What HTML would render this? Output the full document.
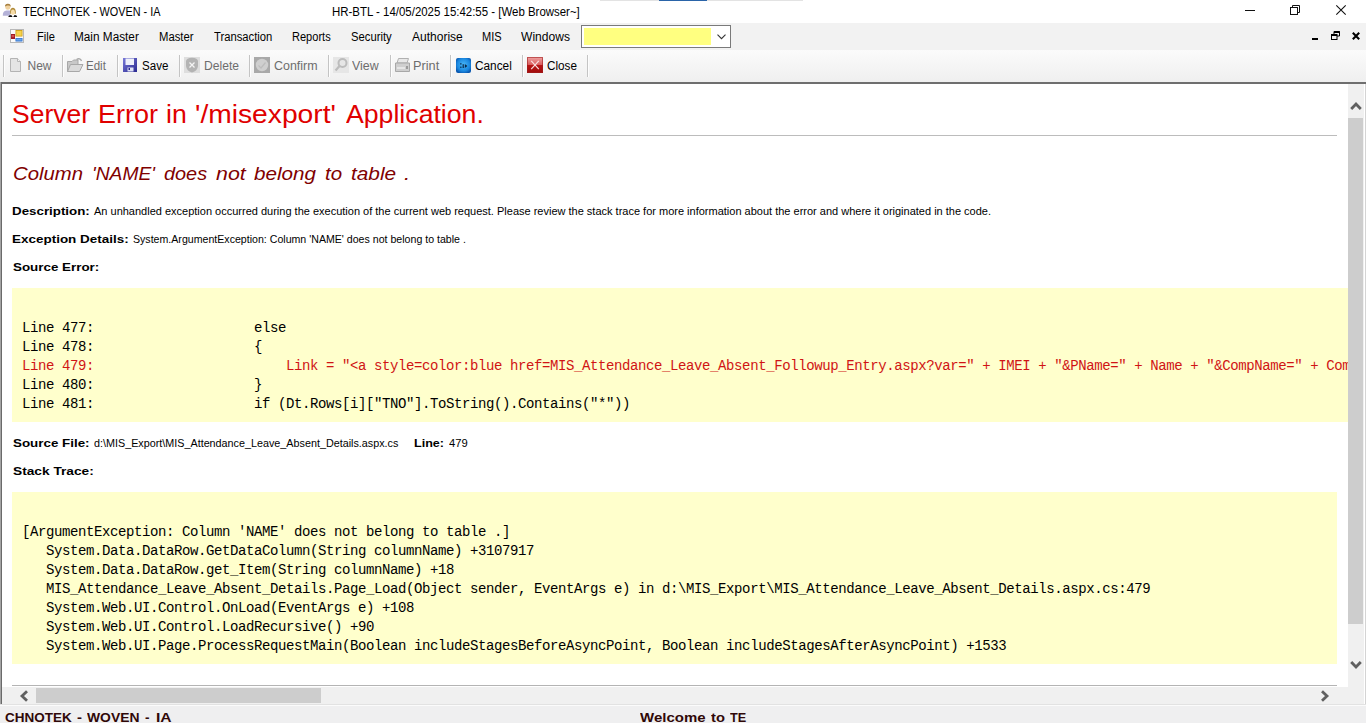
<!DOCTYPE html>
<html><head><meta charset="utf-8">
<style>
*{margin:0;padding:0;box-sizing:border-box}
html,body{width:1366px;height:723px;overflow:hidden;background:#fff;font-family:"Liberation Sans",sans-serif;position:relative}
.a{position:absolute}
.tx{position:absolute;white-space:nowrap;line-height:1;transform-origin:0 0;font-family:"Liberation Sans",sans-serif}
.code{position:absolute;white-space:pre;overflow:hidden;font-family:"Liberation Mono",monospace;color:#000}
.sep{position:absolute;top:55px;width:1px;height:22px;background:#c4c4c4;box-shadow:1px 0 0 #fdfdfd}
svg{position:absolute;overflow:visible}
</style></head><body>
<!-- title bar -->
<div class="a" style="left:600px;top:0;width:203px;height:1px;background:#e3e3e3"></div>
<div class="a" style="left:659px;top:0;width:48px;height:1px;background:#2a64a8"></div>
<svg style="left:0px;top:0px" width="20" height="20" viewBox="0 0 20 20">
 <path d="M2.8 15.8 Q2.6 10.8 6.5 10.6 L9.8 10.6 Q10.6 12 10.4 15.8 Z" fill="#b4b2d8"/>
 <ellipse cx="7.8" cy="6.8" rx="2.6" ry="2.9" fill="#f0d2a0"/>
 <path d="M5 6.5 Q5 3.6 8 3.8 Q10.8 4 10.8 6.8 Q9.5 5 7.2 5.6 Z" fill="#a88040"/>
 <ellipse cx="12.9" cy="11.6" rx="2.5" ry="3.2" fill="#f6dca8"/>
 <path d="M10 13.8 Q9.8 7.6 12.9 7.8 Q16 7.6 15.8 13.8 L15 13.8 Q15.2 9.4 12.9 9.4 Q10.6 9.4 10.8 13.8 Z" fill="#b08a38"/>
 <path d="M8.2 17 Q8.4 15 11.2 14.9 L12.6 17 Z M13.2 17 L14.6 14.9 Q17.2 15 17.2 17 Z" fill="#0e0e0e"/>
</svg>
<!-- window controls -->
<div class="a" style="left:1245px;top:10px;width:10px;height:1px;background:#111"></div>
<svg style="left:1290px;top:5px" width="10" height="10" viewBox="0 0 10 10">
 <rect x="0.5" y="2.5" width="7" height="7" fill="none" stroke="#111" stroke-width="1"/>
 <path d="M2.5 2.5 V0.5 H9.5 V7.5 H7.5" fill="none" stroke="#111" stroke-width="1"/>
</svg>
<svg style="left:1336px;top:5px" width="10" height="10" viewBox="0 0 10 10">
 <path d="M0.3 0.3 L9.7 9.7 M9.7 0.3 L0.3 9.7" stroke="#111" stroke-width="1.1"/>
</svg>

<!-- menu bar -->
<div class="a" style="left:0;top:23px;width:1366px;height:27px;background:#f2f2f2"></div>
<svg style="left:10px;top:29px" width="14" height="14" viewBox="0 0 14 14">
 <rect x="0.5" y="0.5" width="13" height="13" fill="#fbfbfb" stroke="#b8b8b8"/>
 <rect x="1" y="5" width="4" height="5" fill="#a01c24"/>
 <rect x="1.6" y="6" width="2.6" height="2.2" fill="#d04a4a"/>
 <rect x="5.5" y="1" width="7" height="6.5" fill="#c89a10"/>
 <rect x="6.3" y="1.8" width="5.4" height="5" fill="#f6d24a"/>
 <rect x="5.5" y="9" width="7" height="3.5" fill="#2f6fc8"/>
 <rect x="6.2" y="9.6" width="5.6" height="2" fill="#6aa6ee"/>
</svg>
<div class="a" style="left:581px;top:25px;width:150px;height:23px;border:1px solid #7a7a7a;background:#fff"></div>
<div class="a" style="left:584px;top:28px;width:127px;height:17px;background:#ffff80"></div>
<svg style="left:717px;top:34px" width="9" height="6" viewBox="0 0 9 6">
 <path d="M0.5 0.6 L4.5 4.6 L8.5 0.6" fill="none" stroke="#333" stroke-width="1.1"/>
</svg>
<!-- mdi controls -->
<div class="a" style="left:1312px;top:38px;width:6px;height:2px;background:#000"></div>
<svg style="left:1331px;top:31px" width="9" height="9" viewBox="0 0 9 9">
 <path d="M3 3 V0.5 H8.5 V5 H6" fill="none" stroke="#000" stroke-width="1"/>
 <path d="M3 1 H8.5" stroke="#000" stroke-width="2"/>
 <rect x="0.5" y="3.5" width="5.5" height="5" fill="none" stroke="#000" stroke-width="1"/>
 <path d="M0.5 4 H6" stroke="#000" stroke-width="2"/>
</svg>
<svg style="left:1352px;top:32px" width="8" height="8" viewBox="0 0 8 8">
 <path d="M0.8 0.8 L7.2 7.2 M7.2 0.8 L0.8 7.2" stroke="#000" stroke-width="2.1"/>
</svg>

<!-- toolbar -->
<div class="a" style="left:0;top:50px;width:1366px;height:32px;background:linear-gradient(#fbfbfb,#f4f4f4 60%,#efefef)"></div>
<div class="a" style="left:0;top:82px;width:1366px;height:2px;background:#6e6e6e"></div>
<div class="sep" style="left:3px"></div>
<div class="sep" style="left:62px"></div>
<div class="sep" style="left:117px"></div>
<div class="sep" style="left:179px"></div>
<div class="sep" style="left:249px"></div>
<div class="sep" style="left:328px"></div>
<div class="sep" style="left:390px"></div>
<div class="sep" style="left:450px"></div>
<div class="sep" style="left:522px"></div>
<div class="sep" style="left:587px"></div>
<!-- New icon -->
<svg style="left:10px;top:58px" width="12" height="14" viewBox="0 0 12 14">
 <path d="M0.5 0.5 H7.5 L10.5 3.5 V13.5 H0.5 Z" fill="#e4e4e4" stroke="#b4b4b4"/>
 <path d="M7.5 0.5 V3.5 H10.5" fill="#f4f4f4" stroke="#b4b4b4"/>
</svg>
<!-- Edit icon (open folder) -->
<svg style="left:67px;top:58px" width="17" height="14" viewBox="0 0 17 14">
 <path d="M0.5 3.5 H5 L6.5 2 H11 V13.5 H0.5 Z" fill="#c8c8c8" stroke="#a8a8a8"/>
 <path d="M0.5 13.5 L3.5 6.5 H16 L12.5 13.5 Z" fill="#dadada" stroke="#a8a8a8"/>
 <path d="M9.5 1.5 Q13 -0.5 14.5 3" fill="none" stroke="#a8a8a8" stroke-width="1.4"/>
</svg>
<!-- Save icon -->
<svg style="left:123px;top:58px" width="14" height="14" viewBox="0 0 14 14">
 <defs><linearGradient id="gs" x1="0" y1="0" x2="1" y2="1"><stop offset="0" stop-color="#7a7ad8"/><stop offset="1" stop-color="#2a2a90"/></linearGradient></defs>
 <rect x="0" y="0" width="14" height="14" fill="url(#gs)"/>
 <rect x="2.5" y="0.5" width="8.5" height="6.5" fill="#eef0fa"/>
 <rect x="4.5" y="9.5" width="6" height="4" fill="#dfe2f4"/>
 <rect x="5.5" y="10" width="1.5" height="2" fill="#2a2a90"/>
</svg>
<!-- Delete icon -->
<div class="a" style="left:184px;top:57px;width:16px;height:16px;background:#dedede"></div>
<svg style="left:185px;top:57px" width="14" height="16" viewBox="0 0 14 16">
 <path d="M7 0.8 Q12.5 1 13 4 V9 Q12.5 14 7 15.5 Q1.5 14 1 9 V4 Q1.5 1 7 0.8 Z" fill="#b3b3b3"/>
 <path d="M4.5 5.5 L9.5 10.5 M9.5 5.5 L4.5 10.5" stroke="#f4f4f4" stroke-width="1.3"/>
</svg>
<!-- Confirm icon -->
<div class="a" style="left:254px;top:57px;width:16px;height:16px;background:#a9a9a9"></div>
<svg style="left:254px;top:57px" width="16" height="16" viewBox="0 0 16 16">
 <circle cx="8" cy="8" r="6.2" fill="#cfcfcf"/>
 <path d="M4.5 8.5 L7 11 L11.5 5.5" fill="none" stroke="#bdbdbd" stroke-width="1.2"/>
</svg>
<!-- View icon -->
<div class="a" style="left:333px;top:57px;width:16px;height:16px;background:#e6e6e6"></div>
<svg style="left:333px;top:57px" width="16" height="16" viewBox="0 0 16 16">
 <circle cx="9.5" cy="6" r="4" fill="none" stroke="#bcbcbc" stroke-width="2"/>
 <path d="M7 8.5 L2.5 13.5" stroke="#bcbcbc" stroke-width="2.2"/>
</svg>
<!-- Print icon -->
<svg style="left:395px;top:58px" width="15" height="14" viewBox="0 0 15 14">
 <path d="M3.5 0.5 H13.5 L12 5 H2 Z" fill="#e8e8e8" stroke="#b0b0b0"/>
 <path d="M0.5 5 H14.5 V13.5 H0.5 Z" fill="#cfcfcf" stroke="#a8a8a8"/>
 <rect x="2" y="9" width="8" height="2" fill="#e6e6e6"/>
 <rect x="11" y="8" width="2" height="3" fill="#9a9a9a"/>
</svg>
<!-- Cancel icon -->
<svg style="left:456px;top:58px" width="15" height="15" viewBox="0 0 15 15">
 <defs><radialGradient id="gc" cx="0.5" cy="0.45" r="0.6"><stop offset="0" stop-color="#4ab8f8"/><stop offset="0.7" stop-color="#1a88e0"/><stop offset="1" stop-color="#0a58b0"/></radialGradient></defs>
 <rect x="0" y="0" width="15" height="15" rx="2" fill="url(#gc)"/>
 <rect x="4.2" y="5.2" width="1.3" height="1.3" fill="#08284a"/>
 <rect x="4.2" y="8.6" width="1.3" height="1.3" fill="#08284a"/>
 <rect x="6.6" y="6.2" width="1.2" height="3.8" fill="#08284a"/>
 <path d="M8.8 6 L11.4 8 L8.8 10 Z" fill="#08284a"/>
</svg>
<!-- Close icon -->
<svg style="left:527px;top:57px" width="16" height="16" viewBox="0 0 16 16">
 <defs><linearGradient id="gx" x1="0" y1="0" x2="0" y2="1"><stop offset="0" stop-color="#f0a4a4"/><stop offset="0.5" stop-color="#d85a5a"/><stop offset="0.5" stop-color="#b81414"/><stop offset="1" stop-color="#a00c0c"/></linearGradient></defs>
 <rect x="0" y="0" width="16" height="16" fill="url(#gx)"/>
 <rect x="0.5" y="0.5" width="15" height="15" fill="none" stroke="#a02020" stroke-width="1" opacity="0.6"/>
 <path d="M4.2 3.8 L11.8 12.2 M11.8 3.8 L4.2 12.2" stroke="#f8dede" stroke-width="1.2"/>
</svg>

<!-- content frame -->
<div class="a" style="left:0;top:82px;width:1px;height:622px;background:#a4a4a4"></div>
<div class="a" style="left:1px;top:82px;width:1px;height:622px;background:#6a6a6a"></div>
<div class="a" style="left:1365px;top:84px;width:1px;height:621px;background:#d4d4d4"></div>

<!-- page -->
<div class="a" style="left:12px;top:135px;width:1325px;height:1px;background:#bcbcbc"></div>
<div class="a" style="left:12px;top:288px;width:1336px;height:134px;background:#ffffcc"></div>
<div class="code" style="left:22px;top:319px;font-size:14px;letter-spacing:-0.4px;line-height:19px;width:1326px">Line 477:                    else
Line 478:                    {
<span style="color:#d01414">Line 479:                        Link = "&lt;a style=color:blue href=MIS_Attendance_Leave_Absent_Followup_Entry.aspx?var=" + IMEI + "&amp;PName=" + Name + "&amp;CompName=" + CompName</span>
Line 480:                    }
Line 481:                    if (Dt.Rows[i]["TNO"].ToString().Contains("*"))</div>
<div class="a" style="left:12px;top:492px;width:1325px;height:172px;background:#ffffcc"></div>
<div class="code" style="left:22px;top:523px;font-size:14px;letter-spacing:-0.4px;line-height:19px;width:1315px">[ArgumentException: Column 'NAME' does not belong to table .]
   System.Data.DataRow.GetDataColumn(String columnName) +3107917
   System.Data.DataRow.get_Item(String columnName) +18
   MIS_Attendance_Leave_Absent_Details.Page_Load(Object sender, EventArgs e) in d:\MIS_Export\MIS_Attendance_Leave_Absent_Details.aspx.cs:479
   System.Web.UI.Control.OnLoad(EventArgs e) +108
   System.Web.UI.Control.LoadRecursive() +90
   System.Web.UI.Page.ProcessRequestMain(Boolean includeStagesBeforeAsyncPoint, Boolean includeStagesAfterAsyncPoint) +1533</div>
<div class="a" style="left:12px;top:685px;width:1325px;height:1px;background:#b4b4b4"></div>


<!-- vertical scrollbar -->
<div class="a" style="left:1348px;top:84px;width:16px;height:621px;background:#f0f0f0"></div>
<div class="a" style="left:1348px;top:118px;width:15px;height:506px;background:#cdcdcd"></div>
<svg style="left:1350px;top:101px" width="12" height="9" viewBox="0 0 12 9">
 <path d="M1.2 8 L6 3 L10.8 8" fill="none" stroke="#606060" stroke-width="2.8"/>
</svg>
<svg style="left:1350px;top:661px" width="12" height="9" viewBox="0 0 12 9">
 <path d="M1.2 1 L6 6 L10.8 1" fill="none" stroke="#606060" stroke-width="2.8"/>
</svg>
<!-- horizontal scrollbar -->
<div class="a" style="left:2px;top:687px;width:1346px;height:18px;background:#f0f0f0"></div>
<div class="a" style="left:36px;top:688px;width:285px;height:15px;background:#cdcdcd"></div>
<svg style="left:19px;top:690px" width="9" height="12" viewBox="0 0 9 12">
 <path d="M8 1.2 L3 6 L8 10.8" fill="none" stroke="#606060" stroke-width="2.8"/>
</svg>
<svg style="left:1321px;top:690px" width="9" height="12" viewBox="0 0 9 12">
 <path d="M1 1.2 L6 6 L1 10.8" fill="none" stroke="#606060" stroke-width="2.8"/>
</svg>

<!-- status bar -->
<div class="a" style="left:0;top:704px;width:1366px;height:1px;background:#e2e2e2"></div>
<div class="a" style="left:0;top:705px;width:1366px;height:18px;background:#efeff0;border-top:1px solid #fbfbfb"></div>
<div class="tx" style="left:23.43px;top:6.20px;font-size:12px;color:#000;font-weight:normal;font-style:normal;transform:scaleX(0.9046)">TECHNOTEK - WOVEN - IA</div>
<div class="tx" style="left:331.53px;top:6.20px;font-size:12px;color:#000;font-weight:normal;font-style:normal;transform:scaleX(0.9537)">HR-BTL - 14/05/2025 15:42:55 - [Web Browser~]</div>
<div class="tx" style="left:36.53px;top:31.30px;font-size:12px;color:#000;font-weight:normal;font-style:normal;transform:scaleX(0.9240)">File</div>
<div class="tx" style="left:73.53px;top:31.30px;font-size:12px;color:#000;font-weight:normal;font-style:normal;transform:scaleX(0.9819)">Main Master</div>
<div class="tx" style="left:158.55px;top:31.30px;font-size:12px;color:#000;font-weight:normal;font-style:normal;transform:scaleX(0.9417)">Master</div>
<div class="tx" style="left:213.94px;top:31.30px;font-size:12px;color:#000;font-weight:normal;font-style:normal;transform:scaleX(0.9377)">Transaction</div>
<div class="tx" style="left:292.49px;top:31.30px;font-size:12px;color:#000;font-weight:normal;font-style:normal;transform:scaleX(0.9198)">Reports</div>
<div class="tx" style="left:351.48px;top:31.30px;font-size:12px;color:#000;font-weight:normal;font-style:normal;transform:scaleX(0.9377)">Security</div>
<div class="tx" style="left:412.00px;top:31.30px;font-size:12px;color:#000;font-weight:normal;font-style:normal;transform:scaleX(1.0012)">Authorise</div>
<div class="tx" style="left:482.09px;top:31.30px;font-size:12px;color:#000;font-weight:normal;font-style:normal;transform:scaleX(0.9186)">MIS</div>
<div class="tx" style="left:521.47px;top:31.30px;font-size:12px;color:#000;font-weight:normal;font-style:normal;transform:scaleX(1.0051)">Windows</div>
<div class="tx" style="left:27.50px;top:60.00px;font-size:12px;color:#6d6d6d;font-weight:normal;font-style:normal;transform:scaleX(1.0000)">New</div>
<div class="tx" style="left:86.01px;top:60.00px;font-size:12px;color:#6d6d6d;font-weight:normal;font-style:normal;transform:scaleX(0.9614)">Edit</div>
<div class="tx" style="left:141.50px;top:59.60px;font-size:12px;color:#000;font-weight:normal;font-style:normal;transform:scaleX(0.9643)">Save</div>
<div class="tx" style="left:203.93px;top:60.20px;font-size:12px;color:#6d6d6d;font-weight:normal;font-style:normal;transform:scaleX(1.0081)">Delete</div>
<div class="tx" style="left:273.50px;top:60.20px;font-size:12px;color:#6d6d6d;font-weight:normal;font-style:normal;transform:scaleX(1.0358)">Confirm</div>
<div class="tx" style="left:351.96px;top:60.20px;font-size:12px;color:#6d6d6d;font-weight:normal;font-style:normal;transform:scaleX(1.0334)">View</div>
<div class="tx" style="left:413.45px;top:60.20px;font-size:12px;color:#6d6d6d;font-weight:normal;font-style:normal;transform:scaleX(1.0629)">Print</div>
<div class="tx" style="left:475.02px;top:60.40px;font-size:12px;color:#000;font-weight:normal;font-style:normal;transform:scaleX(0.9857)">Cancel</div>
<div class="tx" style="left:547.03px;top:60.40px;font-size:12px;color:#000;font-weight:normal;font-style:normal;transform:scaleX(0.9763)">Close</div>
<div class="tx" style="left:11.84px;top:102.00px;font-size:25px;color:#e00000;font-weight:normal;font-style:normal;transform:scaleX(1.0590)">Server</div>
<div class="tx" style="left:97.89px;top:102.00px;font-size:25px;color:#e00000;font-weight:normal;font-style:normal;transform:scaleX(1.0787)">Error</div>
<div class="tx" style="left:166.22px;top:102.00px;font-size:25px;color:#e00000;font-weight:normal;font-style:normal;transform:scaleX(1.0647)">in</div>
<div class="tx" style="left:195.06px;top:102.00px;font-size:25px;color:#e00000;font-weight:normal;font-style:normal;transform:scaleX(1.1287)">'/misexport'</div>
<div class="tx" style="left:345.55px;top:102.00px;font-size:25px;color:#e00000;font-weight:normal;font-style:normal;transform:scaleX(1.0666)">Application.</div>
<div class="tx" style="left:12.87px;top:165.10px;font-size:18px;color:#800000;font-weight:normal;font-style:italic;transform:scaleX(1.1291)">Column</div>
<div class="tx" style="left:92.35px;top:165.10px;font-size:18px;color:#800000;font-weight:normal;font-style:italic;transform:scaleX(1.0695)">'NAME'</div>
<div class="tx" style="left:164.00px;top:165.10px;font-size:18px;color:#800000;font-weight:normal;font-style:italic;transform:scaleX(1.1038)">does</div>
<div class="tx" style="left:215.94px;top:165.10px;font-size:18px;color:#800000;font-weight:normal;font-style:italic;transform:scaleX(1.1881)">not</div>
<div class="tx" style="left:253.68px;top:165.10px;font-size:18px;color:#800000;font-weight:normal;font-style:italic;transform:scaleX(1.1461)">belong</div>
<div class="tx" style="left:324.93px;top:165.10px;font-size:18px;color:#800000;font-weight:normal;font-style:italic;transform:scaleX(1.1372)">to</div>
<div class="tx" style="left:350.67px;top:165.10px;font-size:18px;color:#800000;font-weight:normal;font-style:italic;transform:scaleX(1.1551)">table</div>
<div class="tx" style="left:403.61px;top:165.10px;font-size:18px;color:#800000;font-weight:normal;font-style:italic;transform:scaleX(1.2144)">.</div>
<div class="tx" style="left:12.44px;top:206.05px;font-size:11px;color:#000;font-weight:bold;font-style:normal;transform:scaleX(1.2122)">Description:</div>
<div class="tx" style="left:94.00px;top:206.05px;font-size:11px;color:#000;font-weight:normal;font-style:normal;transform:scaleX(1.0000)">An unhandled exception occurred during the execution of the current web request. Please review the stack trace for more information about the error and where it originated in the code.</div>
<div class="tx" style="left:12.43px;top:233.65px;font-size:11px;color:#000;font-weight:bold;font-style:normal;transform:scaleX(1.2236)">Exception Details:</div>
<div class="tx" style="left:133.49px;top:233.65px;font-size:11px;color:#000;font-weight:normal;font-style:normal;transform:scaleX(0.9639)">System.ArgumentException: Column 'NAME' does not belong to table .</div>
<div class="tx" style="left:12.56px;top:262.05px;font-size:11px;color:#000;font-weight:bold;font-style:normal;transform:scaleX(1.2169)">Source Error:</div>
<div class="tx" style="left:12.56px;top:438.05px;font-size:11px;color:#000;font-weight:bold;font-style:normal;transform:scaleX(1.2160)">Source File:</div>
<div class="tx" style="left:93.50px;top:438.05px;font-size:11px;color:#000;font-weight:normal;font-style:normal;transform:scaleX(0.9799)">d:\MIS_Export\MIS_Attendance_Leave_Absent_Details.aspx.cs</div>
<div class="tx" style="left:414.40px;top:438.05px;font-size:11px;color:#000;font-weight:bold;font-style:normal;transform:scaleX(1.1418)">Line:</div>
<div class="tx" style="left:448.56px;top:438.05px;font-size:11px;color:#000;font-weight:normal;font-style:normal;transform:scaleX(1.0184)">479</div>
<div class="tx" style="left:12.57px;top:466.05px;font-size:11px;color:#000;font-weight:bold;font-style:normal;transform:scaleX(1.2464)">Stack Trace:</div>
<div class="tx" style="left:5.29px;top:712.40px;font-size:12px;color:#300808;font-weight:bold;font-style:normal;transform:scaleX(1.1253)">CHNOTEK</div>
<div class="tx" style="left:76.82px;top:712.40px;font-size:12px;color:#300808;font-weight:bold;font-style:normal;transform:scaleX(1.2500)">-</div>
<div class="tx" style="left:87.29px;top:712.40px;font-size:12px;color:#300808;font-weight:bold;font-style:normal;transform:scaleX(1.1573)">WOVEN</div>
<div class="tx" style="left:145.19px;top:712.40px;font-size:12px;color:#300808;font-weight:bold;font-style:normal;transform:scaleX(1.1310)">-</div>
<div class="tx" style="left:156.35px;top:712.40px;font-size:12px;color:#300808;font-weight:bold;font-style:normal;transform:scaleX(1.3032)">IA</div>
<div class="tx" style="left:639.93px;top:712.40px;font-size:12px;color:#300808;font-weight:bold;font-style:normal;transform:scaleX(1.2494)">Welcome</div>
<div class="tx" style="left:710.90px;top:712.40px;font-size:12px;color:#300808;font-weight:bold;font-style:normal;transform:scaleX(1.2264)">to</div>
<div class="tx" style="left:730.18px;top:712.40px;font-size:12px;color:#300808;font-weight:bold;font-style:normal;transform:scaleX(1.0562)">TE</div>
</body></html>
